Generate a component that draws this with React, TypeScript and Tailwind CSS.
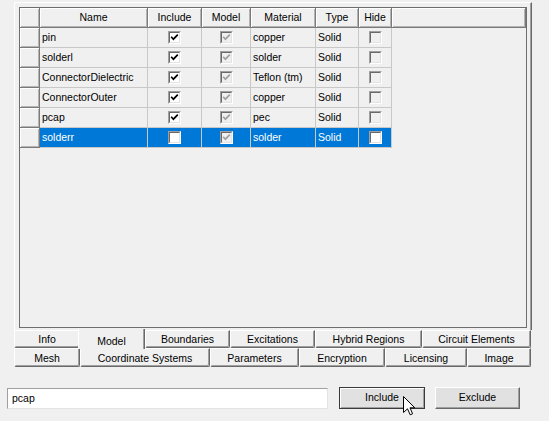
import clsx from 'clsx';

type Row = { name: string; include: boolean; material: string; type: string; selected?: boolean };

const rows: Row[] = [
  { name: 'pin', include: true, material: 'copper', type: 'Solid' },
  { name: 'solderl', include: true, material: 'solder', type: 'Solid' },
  { name: 'ConnectorDielectric', include: true, material: 'Teflon (tm)', type: 'Solid' },
  { name: 'ConnectorOuter', include: true, material: 'copper', type: 'Solid' },
  { name: 'pcap', include: true, material: 'pec', type: 'Solid' },
  { name: 'solderr', include: false, material: 'solder', type: 'Solid', selected: true },
];

// header columns, widths include the right grid line
const columns = [
  { label: 'Name', w: 'w-[108px]' },
  { label: 'Include', w: 'w-[54px]' },
  { label: 'Model', w: 'w-[49px]' },
  { label: 'Material', w: 'w-[65px]' },
  { label: 'Type', w: 'w-[43px]' },
  { label: 'Hide', w: 'w-[33px]' },
];

const tabsTop = [
  { label: 'Info', w: 'w-[66px]' },
  { label: 'Model', w: 'w-[67px]', active: true },
  { label: 'Boundaries', w: 'w-[85px]' },
  { label: 'Excitations', w: 'w-[85px]' },
  { label: 'Hybrid Regions', w: 'w-[107px]' },
  { label: 'Circuit Elements', w: 'w-[109px]' },
];

const tabsBottom = [
  { label: 'Mesh', w: 'w-[66px]' },
  { label: 'Coordinate Systems', w: 'w-[130px]' },
  { label: 'Parameters', w: 'w-[89px]' },
  { label: 'Encryption', w: 'w-[86px]' },
  { label: 'Licensing', w: 'w-[82px]' },
  { label: 'Image', w: 'w-[64px]' },
];

const raised =
  'bg-[#f0f0f0] border-r border-b border-[#7a7a7a] shadow-[inset_1px_1px_0_#ffffff,inset_-1px_-1px_0_#b4b4b4]';

function CheckBox({ checked, disabled, white }: { checked: boolean; disabled?: boolean; white?: boolean }) {
  return (
    <div className="w-[13px] h-[13px] flex border border-t-[#a0a0a0] border-l-[#a0a0a0] border-r-white border-b-white">
      <div
        className={clsx(
          'flex-1 flex items-center justify-center border border-t-[#696969] border-l-[#696969] border-r-[#e3e3e3] border-b-[#e3e3e3]',
          white ? 'bg-white' : 'bg-[#f0f0f0]'
        )}
      >
        {checked && (
          <svg width="9" height="9" viewBox="0 0 9 9">
            <path
              d="M1.2 3.8 L3.4 6.2 L7.8 1.6"
              fill="none"
              stroke={disabled ? '#a0a0a0' : '#000000'}
              strokeWidth="1.7"
            />
          </svg>
        )}
      </div>
    </div>
  );
}

function DataCell({ w, selected, children, center }: { w: string; selected?: boolean; children: React.ReactNode; center?: boolean }) {
  return (
    <div
      className={clsx(
        w,
        'h-full flex items-center border-r border-b border-[#c8c8c8] overflow-hidden whitespace-nowrap',
        center ? 'justify-center' : 'pl-[2px]',
        selected ? 'bg-[#0078d7] text-white' : 'bg-[#f0f0f0] text-black'
      )}
    >
      {children}
    </div>
  );
}

function Grid() {
  return (
    <div className="w-[508px] h-[321px] border border-[#6e6e6e] bg-[#f0f0f0] flex flex-col">
      <div className="flex h-[20px]">
        <div className={clsx(raised, 'w-[20px] h-full')} />
        {columns.map((c) => (
          <div key={c.label} className={clsx(raised, c.w, 'h-full flex items-center justify-center')}>
            {c.label}
          </div>
        ))}
        <div className={clsx(raised, 'flex-1 h-full')} />
      </div>
      {rows.map((r) => (
        <div key={r.name} className="flex h-[20px]">
          <div className={clsx(raised, 'w-[20px] h-full')} />
          <DataCell w="w-[108px]" selected={r.selected}>{r.name}</DataCell>
          <DataCell w="w-[54px]" selected={r.selected} center>
            <CheckBox checked={r.include} white />
          </DataCell>
          <DataCell w="w-[49px]" selected={r.selected} center>
            <CheckBox checked disabled />
          </DataCell>
          <DataCell w="w-[65px]" selected={r.selected}>{r.material}</DataCell>
          <DataCell w="w-[43px]" selected={r.selected}>{r.type}</DataCell>
          <DataCell w="w-[33px]" selected={r.selected} center>
            <CheckBox checked={false} white={r.selected} />
          </DataCell>
        </div>
      ))}
    </div>
  );
}

function Tab({ label, w, active }: { label: string; w: string; active?: boolean }) {
  if (active) {
    return (
      <div
        className={clsx(
          w,
          '-ml-[2px] -mt-[1px] h-[20px] relative z-10 flex items-center justify-center pt-[5px] bg-[#f0f0f0] border-l border-white border-r border-r-[#696969] shadow-[inset_-1px_0_0_#a0a0a0]'
        )}
      >
        {label}
      </div>
    );
  }
  return (
    <div
      className={clsx(
        w,
        'h-full flex items-center justify-center pt-[2px] bg-[#f0f0f0] border-t border-l border-white border-r border-r-[#696969] border-b border-b-[#696969] rounded-b-[2px] shadow-[inset_-1px_-1px_0_#a0a0a0]'
      )}
    >
      {label}
    </div>
  );
}

function Cursor() {
  return (
    <svg className="absolute left-[403px] top-[396px]" width="13" height="20" viewBox="0 0 13 20">
      <path
        d="M0.5 0.5 L0.5 16.5 L4.5 12.8 L7.2 18.8 L9.6 17.8 L7 11.8 L11.8 11.8 Z"
        fill="#ffffff"
        stroke="#000000"
        strokeWidth="1"
        strokeLinejoin="miter"
      />
    </svg>
  );
}

export default function App() {
  return (
    <div className="relative w-[549px] h-[421px] bg-[#f0f0f0] overflow-hidden font-['Liberation_Sans',Arial,sans-serif] text-[10.5px] text-black">
      <div className="ml-[14px] pt-[2px] w-[518px]">
        {/* tab page */}
        <div className="h-[328px] border-t border-l border-white border-r border-r-[#696969] shadow-[inset_-1px_0_0_#a0a0a0] pl-[4px] pt-[4px]">
          <Grid />
        </div>
        <div className="flex h-[18px] w-[517px]">
          {tabsTop.map((t) => (
            <Tab key={t.label} {...t} />
          ))}
        </div>
        <div className="flex h-[19px] w-[517px]">
          {tabsBottom.map((t) => (
            <Tab key={t.label} {...t} />
          ))}
        </div>
      </div>

      <div className="flex items-start pl-[7px] mt-[20px]">
        <div className="mt-[1px] w-[321px] h-[21px] bg-white border border-t-[#a0a0a0] border-l-[#a0a0a0] border-r-[#e3e3e3] border-b-[#e3e3e3] flex items-center pl-[4px]">
          pcap
        </div>
        <button className="ml-[11px] w-[86px] h-[22px] bg-[#e1e1e1] border border-[#3a3a3a] shadow-[inset_1px_1px_0_#ffffff,inset_-1px_-1px_0_#a0a0a0] flex items-center justify-center">
          Include
        </button>
        <button className="ml-[10px] w-[85px] h-[22px] bg-[#e1e1e1] border border-t-white border-l-white border-r-[#696969] border-b-[#696969] shadow-[inset_-1px_-1px_0_#a0a0a0] flex items-center justify-center">
          Exclude
        </button>
      </div>

      <Cursor />
    </div>
  );
}
